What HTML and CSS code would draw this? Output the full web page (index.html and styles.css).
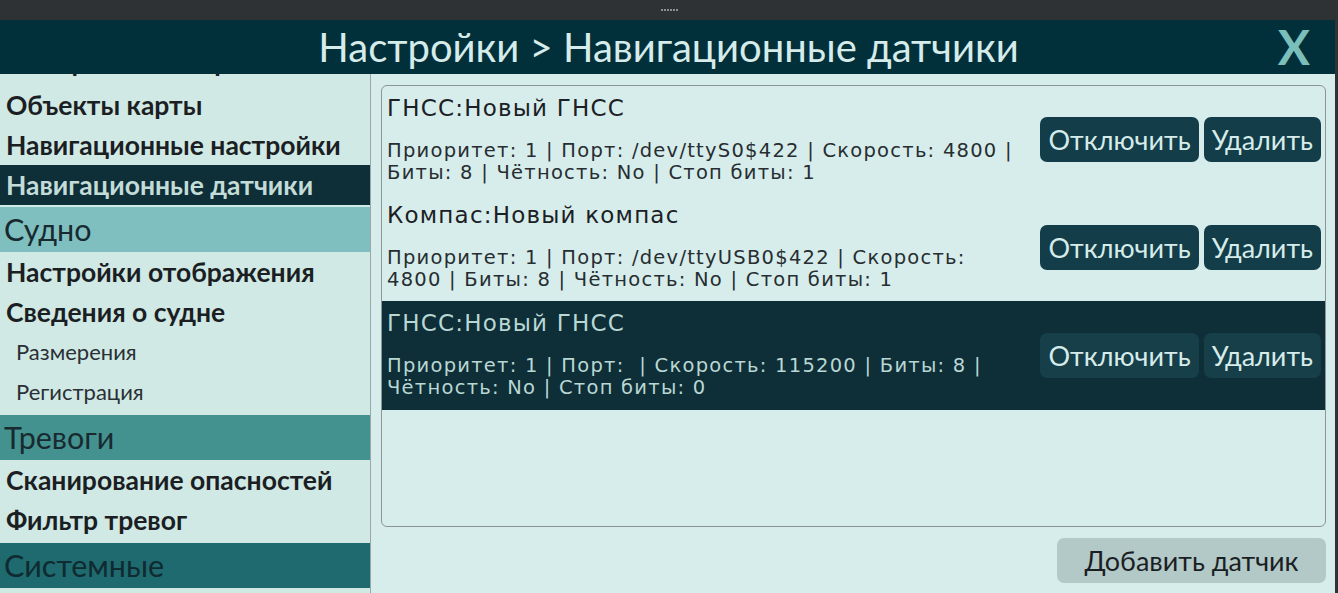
FILE: index.html
```html
<!DOCTYPE html>
<html lang="ru">
<head>
<meta charset="utf-8">
<title>Настройки</title>
<link rel="stylesheet" href="styles.css">
</head>
<body>
<div class="window">
  <div class="topbar"><span class="grip"><i></i><i></i><i></i><i></i><i></i><i></i></span></div>
  <header class="header">
    <h1 class="title">Настройки &gt; Навигационные датчики</h1>
    <span class="close">X</span>
  </header>
  <div class="main">
    <nav class="sidebar">
      <div class="nav-list">
        <div class="item clipped">Отображение карты</div>
        <div class="item">Объекты карты</div>
        <div class="item">Навигационные настройки</div>
        <div class="item active">Навигационные датчики</div>
        <div class="section s1">Судно</div>
        <div class="item">Настройки отображения</div>
        <div class="item">Сведения о судне</div>
        <div class="sub">Размерения</div>
        <div class="sub">Регистрация</div>
        <div class="section s2">Тревоги</div>
        <div class="item">Сканирование опасностей</div>
        <div class="item">Фильтр тревог</div>
        <div class="section s3">Системные</div>
      </div>
    </nav>
    <section class="content">
      <div class="list">
        <div class="row r1">
          <div class="info">
            <div class="name">ГНСС:Новый ГНСС</div>
            <div class="details">Приоритет: 1 | Порт: /dev/ttyS0$422 | Скорость: 4800 |<br>Биты: 8 | Чётность: No | Стоп биты: 1</div>
          </div>
          <div class="actions">
            <button class="btn">Отключить</button>
            <button class="btn">Удалить</button>
          </div>
        </div>
        <div class="row r2">
          <div class="info">
            <div class="name">Компас:Новый компас</div>
            <div class="details">Приоритет: 1 | Порт: /dev/ttyUSB0$422 | Скорость:<br>4800 | Биты: 8 | Чётность: No | Стоп биты: 1</div>
          </div>
          <div class="actions">
            <button class="btn">Отключить</button>
            <button class="btn">Удалить</button>
          </div>
        </div>
        <div class="row selected">
          <div class="info">
            <div class="name">ГНСС:Новый ГНСС</div>
            <div class="details">Приоритет: 1 | Порт: &nbsp;| Скорость: 115200 | Биты: 8 |<br>Чётность: No | Стоп биты: 0</div>
          </div>
          <div class="actions">
            <button class="btn">Отключить</button>
            <button class="btn">Удалить</button>
          </div>
        </div>
      </div>
      <div class="footer">
        <button class="add">Добавить датчик</button>
      </div>
    </section>
  </div>
</div>
</body>
</html>
```

FILE: styles.css
```css
* { box-sizing: border-box; }
html, body { margin: 0; padding: 0; }
body {
  background: #2f3235;
  width: 1338px;
  height: 593px;
  overflow: hidden;
  font-family: "Lato", "DejaVu Sans", sans-serif;
}
.window {
  width: 1335px;
  height: 593px;
  display: flex;
  flex-direction: column;
}
.topbar {
  height: 20px;
  background: #2f3235;
  display: flex;
  justify-content: center;
  align-items: center;
}
.grip { display: flex; gap: 1px; margin-left: 4px; }
.grip i { width: 2px; height: 2px; background: #8a8f94; display: block; }
.header {
  height: 54px;
  background: #02303a;
  display: flex;
  align-items: center;
  justify-content: center;
  position: relative;
}
.title {
  margin: 0;
  font-weight: 400;
  font-size: 40px;
  line-height: 48px;
  color: #d6ecea;
  margin-left: 2px;
}
.close {
  position: absolute;
  right: 25px;
  top: 2px;
  font-size: 48px;
  font-weight: 700;
  color: #7bbfba;
  line-height: 50px;
}
.main {
  flex: 1;
  display: flex;
  min-height: 0;
}
.sidebar {
  width: 371px;
  background: #d1e9e4;
  border-right: 1px solid #9aa7a6;
  overflow: hidden;
}
.nav-list { margin-top: -29px; }
.item {
  height: 40px;
  line-height: 40px;
  padding-left: 6px;
  font-weight: 700;
  font-size: 26.5px;
  color: #1b1f24;
  white-space: nowrap;
}
.item.clipped { line-height: 34px; }
.item.active {
  background: #0e2e38;
  color: #c3dcd8;
}
.sub {
  height: 40px;
  line-height: 40px;
  padding-left: 16px;
  font-size: 22px;
  color: #2a3035;
}
.section {
  height: 45px;
  line-height: 45px;
  padding-left: 4px;
  font-size: 30.5px;
  color: #182a30;
  margin-top: 2px;
}
.s2, .s3 { margin-top: 3px; }
.s1 { background: #7fbfbf; }
.s2 { background: #44928f; }
.s3 { background: #1e6a6f; color: #0f2a30; }
.content {
  flex: 1;
  background: #d7edeb;
  padding: 11px 9px 10px 10px;
  display: flex;
  flex-direction: column;
  gap: 11px;
}
.list {
  flex: 1;
  border: 1px solid #8c9695;
  border-radius: 6px;
  background: #d7edeb;
  overflow: hidden;
}
.row {
  display: flex;
  padding: 0 4px 0 5px;
  height: 107px;
}
.r2 { height: 108px; }
.row.selected { height: 109px; background: #0e2e38; }
.info {
  flex: 1;
  font-family: "DejaVu Sans", sans-serif;
  padding-top: 9px;
}
.name {
  font-size: 23px;
  line-height: 26px;
  letter-spacing: 1.2px;
  color: #1b2024;
  margin-bottom: 19px;
}
.details {
  font-size: 19.5px;
  line-height: 22px;
  letter-spacing: 1.25px;
  color: #272d31;
}
.selected .name, .selected .details { color: #b9d7d3; }
.actions { display: flex; gap: 5px; align-self: center; }
.btn {
  font-family: "Lato", sans-serif;
  font-size: 27px;
  height: 45px;
  padding: 0 8px;
  border: none;
  border-radius: 7px;
  background: #133d48;
  color: #d6ecea;
  cursor: pointer;
}
.selected .btn { background: #173f49; }
.footer { display: flex; justify-content: flex-end; }
.add {
  font-family: "Lato", sans-serif;
  font-size: 27px;
  height: 45px;
  width: 269px;
  border: none;
  border-radius: 7px;
  background: #b2c9c7;
  color: #1b1f24;
}
```
